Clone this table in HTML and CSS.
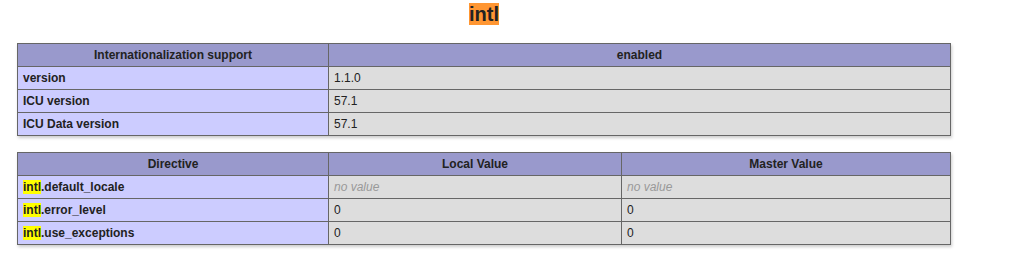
FILE: index.html
```html
<!DOCTYPE html>
<html>
<head>
<meta charset="utf-8">
<link rel="stylesheet" href="styles.css">
</head>
<body>
<div class="center">
  <h2><a class="cur">intl</a></h2>
  <table>
    <tr class="h"><th>Internationalization support</th><th>enabled</th></tr>
    <tr><td class="e">version</td><td class="v">1.1.0</td></tr>
    <tr><td class="e">ICU version</td><td class="v">57.1</td></tr>
    <tr><td class="e">ICU Data version</td><td class="v">57.1</td></tr>
  </table>
  <table>
    <tr class="h"><th>Directive</th><th class="local">Local Value</th><th>Master Value</th></tr>
    <tr><td class="e"><span class="hl">intl</span>.default_locale</td><td class="v"><i>no value</i></td><td class="v"><i>no value</i></td></tr>
    <tr><td class="e"><span class="hl">intl</span>.error_level</td><td class="v">0</td><td class="v">0</td></tr>
    <tr><td class="e"><span class="hl">intl</span>.use_exceptions</td><td class="v">0</td><td class="v">0</td></tr>
  </table>
</div>
</body>
</html>
```
FILE: styles.css
```css
body {
  margin: 0;
  background-color: #fff;
  color: #222;
  font-family: "Liberation Sans", Arial, sans-serif;
}
.center {
  width: 934px;
  margin-left: 17px;
  text-align: center;
}
h2 {
  font-size: 20px;
  margin: 3px 0 0 0;
  line-height: 23px;
}
.cur {
  background-color: #ff9632;
}
.hl {
  background-color: #ffff00;
}
table {
  border-collapse: collapse;
  border: 0;
  width: 934px;
  box-shadow: 1px 2px 3px #ccc;
  margin: 17px 0 16px 0;
  text-align: left;
}
table + table {
  margin-top: 16px;
}
td, th {
  border: 1px solid #666;
  font-size: 12px;
  vertical-align: baseline;
  padding: 4px 5px;
}
th {
  text-align: center;
}
.h {
  background-color: #99c;
  font-weight: bold;
}
.e {
  background-color: #ccf;
  width: 300px;
  font-weight: bold;
}
.local {
  width: 282px;
}
.v {
  background-color: #ddd;
  max-width: 300px;
}
.v i {
  color: #999;
}
```
